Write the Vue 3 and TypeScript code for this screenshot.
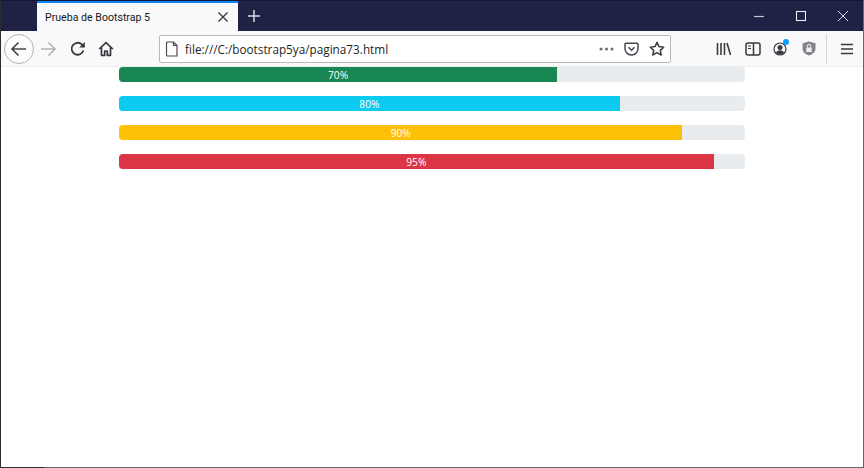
<script setup lang="ts">
const bars = [
  { value: 70, color: '#198754' },
  { value: 80, color: '#0dcaf0' },
  { value: 90, color: '#ffc107' },
  { value: 95, color: '#dc3545' },
]
</script>

<template>
  <div class="window">
    <header class="titlebar">
      <div class="tab">
        <span class="tab-title">Prueba de Bootstrap 5</span>
        <svg class="tab-close" width="12" height="12" viewBox="0 0 12 12"><path d="M1.5 1.5l9 9M10.5 1.5l-9 9" stroke="#3a3a44" stroke-width="1.4" fill="none"/></svg>
      </div>
      <svg class="new-tab" width="14" height="14" viewBox="0 0 14 14"><path d="M7 1v12M1 7h12" stroke="#d8d9e2" stroke-width="1.5" fill="none"/></svg>
      <div class="win-controls">
        <svg width="12" height="12" viewBox="0 0 12 12"><path d="M1 6.500h10" stroke="#c8c9d4" stroke-width="1.2" fill="none"/></svg>
        <svg width="12" height="12" viewBox="0 0 12 12"><rect x="1.500" y="1.500" width="9" height="9" stroke="#ececf2" stroke-width="1.1" fill="none"/></svg>
        <svg width="12" height="12" viewBox="0 0 12 12"><path d="M1 1l10 10M11 1L1 11" stroke="#dcdce6" stroke-width="1" fill="none"/></svg>
      </div>
    </header>

    <nav class="toolbar">
      <div class="back">
        <svg width="18" height="16" viewBox="0 0 18 16"><path d="M16 8H2M8.500 1.500L2 8l6.500 6.500" stroke="#45454d" stroke-width="1.6" fill="none"/></svg>
      </div>
      <svg class="forward" width="18" height="16" viewBox="0 0 18 16"><path d="M2 8h14M9.500 1.500L16 8l-6.500 6.500" stroke="#b4b4b9" stroke-width="1.6" fill="none"/></svg>
      <svg class="reload" width="16" height="16" viewBox="0 0 16 16"><path d="M13.400 9.500A6 6 0 1 1 11.800 3.400L14 5.500" stroke="#38383f" stroke-width="1.8" fill="none"/><path d="M14.800 1v5.600H9.200z" fill="#38383f"/></svg>
      <svg class="home" width="16" height="16" viewBox="0 0 16 16"><path d="M1.200 8L8 1.600 14.800 8M3.500 6.600v7.700h3.200V10h2.600v4.300h3.200V6.600" stroke="#38383f" stroke-width="1.7" fill="none" stroke-linejoin="round"/></svg>

      <div class="urlbar">
        <svg class="file" width="14" height="16" viewBox="0 0 14 16"><path d="M2.500 1h6l3.500 3.500v10.500h-9.500a1 1 0 0 1-1-1V2a1 1 0 0 1 1-1zM8.500 1v3.500H12" stroke="#4a4a52" stroke-width="1.200" fill="none"/></svg>
        <span class="url">file:///C:/bootstrap5ya/pagina73.html</span>
        <svg class="dots" width="15" height="4" viewBox="0 0 15 4"><circle cx="2" cy="2" r="1.500" fill="#6a6a72"/><circle cx="7.500" cy="2" r="1.500" fill="#6a6a72"/><circle cx="13" cy="2" r="1.500" fill="#6a6a72"/></svg>
        <svg class="pocket" width="15" height="14" viewBox="0 0 15 14"><path d="M1 2.200a1 1 0 0 1 1-1h11a1 1 0 0 1 1 1v4.300a6.500 6.500 0 0 1-13 0zM4.500 5.200l3 3 3-3" stroke="#47474f" stroke-width="1.500" fill="none"/></svg>
        <svg class="star" width="16" height="15" viewBox="0 0 16 15"><path d="M8 1.300l2 4.300 4.700.6-3.400 3.200.9 4.600L8 11.700 3.800 14l.9-4.600L1.300 6.200 6 5.600z" stroke="#3c3c44" stroke-width="1.500" fill="none" stroke-linejoin="round"/></svg>
      </div>

      <svg class="library" width="16" height="14" viewBox="0 0 16 14"><path d="M1.500 1v12M5 1v12M8.500 1v12M11 1l3.500 12" stroke="#3c3c44" stroke-width="1.600" fill="none"/></svg>
      <svg class="sidebar" width="16" height="14" viewBox="0 0 16 14"><rect x="1" y="1" width="14" height="12" rx="2" stroke="#38383f" stroke-width="1.500" fill="none"/><path d="M8.500 1v12" stroke="#38383f" stroke-width="1.500"/><path d="M3 4h3M3 6.500h3" stroke="#38383f" stroke-width="1"/></svg>
      <div class="account">
        <svg width="14" height="14" viewBox="0 0 14 14"><circle cx="7" cy="7" r="6" stroke="#3c3c44" stroke-width="1.200" fill="none"/><circle cx="7" cy="5.500" r="2.500" fill="#3c3c44"/><path d="M2.800 11c.7-2 2.300-2.800 4.200-2.800s3.500.8 4.200 2.800A6 6 0 0 1 2.800 11z" fill="#3c3c44"/></svg>
        <span class="dot"></span>
      </div>
      <svg class="shield" width="14" height="15" viewBox="0 0 14 15"><path d="M7 .5l6.500 1.800v5.200c0 3.500-3 6-6.500 7-3.500-1-6.500-3.500-6.500-7V2.300z" fill="#85858b"/><rect x="4.300" y="6.500" width="5.400" height="4.500" rx=".6" fill="#f0f0f2"/><path d="M5.400 6.500V5a1.600 1.600 0 0 1 3.200 0v1.500" stroke="#f0f0f2" stroke-width="1" fill="none"/></svg>
      <span class="sep"></span>
      <svg class="menu" width="12" height="12" viewBox="0 0 12 12"><path d="M0 1.500h12M0 6h12M0 10.500h12" stroke="#38383f" stroke-width="1.600" fill="none"/></svg>
    </nav>

    <main class="content">
      <div v-for="bar in bars" :key="bar.value" class="progress">
        <div class="progress-bar" :style="{ width: bar.value + '%', background: bar.color }">{{ bar.value }}%</div>
      </div>
    </main>
  </div>
</template>

<style>
html, body { margin: 0; background: #fff; overflow: hidden; }
</style>

<style scoped>
.window {
  position: relative;
  width: 864px;
  height: 468px;
  box-sizing: border-box;
  display: flex;
  flex-direction: column;
  border-left: 1px solid #2b2b33;
  border-bottom: 1px solid #666;
  border-right: 1px solid #666;
  background: #fff;
  font-family: "Open Sans", "Noto Sans", sans-serif;
}
.window::after {
  content: "";
  position: absolute;
  left: -1px;
  bottom: -1px;
  width: 44px;
  height: 1px;
  background: #2b2b33;
}
.titlebar {
  height: 31px;
  flex: none;
  box-sizing: border-box;
  background: #1f2244;
  border-top: 1px solid #17182f;
  display: flex;
  align-items: flex-start;
}
.tab {
  margin-left: 36px;
  width: 201px;
  height: 30px;
  box-sizing: border-box;
  background: #f9f9fa;
  border-top: 2px solid #0a84ff;
  display: flex;
  align-items: center;
  padding: 0 9px 0 8px;
  justify-content: space-between;
  color: #18181a;
}
.tab-title {
  font-size: 10.6px;
  font-family: Roboto, sans-serif;
  white-space: nowrap;
}
.new-tab { margin: 8px 0 0 9px; }
.win-controls {
  margin-left: auto;
  margin-top: 9px;
  margin-right: 14px;
  display: flex;
  gap: 30px;
}
.toolbar {
  height: 36px;
  flex: none;
  box-sizing: border-box;
  background: #f9f9fa;
  border-bottom: 1px solid #ececee;
  display: flex;
  align-items: center;
  padding-left: 3px;
}
.back {
  width: 30px;
  height: 30px;
  box-sizing: border-box;
  border: 1px solid #b4b4b8;
  border-radius: 50%;
  background: #fdfdfd;
  display: flex;
  align-items: center;
  justify-content: center;
  flex: none;
}
.forward { margin-left: 5px; flex: none; }
.reload { margin-left: 13px; flex: none; }
.home { margin-left: 12px; flex: none; }
.urlbar {
  margin-left: 45px;
  width: 512px;
  height: 28px;
  box-sizing: border-box;
  background: #fff;
  border: 1px solid #b9b9bd;
  border-radius: 2px;
  display: flex;
  align-items: center;
  padding-left: 5px;
  flex: none;
}
.file { flex: none; }
.url {
  margin-left: 6px;
  font-size: 11.75px;
  color: #1f1f24;
  white-space: nowrap;
  font-family: "Open Sans", sans-serif;
}
.dots { margin-left: auto; flex: none; }
.pocket { margin-left: 10px; flex: none; }
.star { margin-left: 10px; margin-right: 5px; flex: none; }
.library { margin-left: 45px; flex: none; }
.sidebar { margin-left: 13px; flex: none; }
.account { margin-left: 12px; position: relative; width: 14px; height: 14px; flex: none; }
.account svg { display: block; }
.dot {
  position: absolute;
  top: -3px;
  right: -2px;
  width: 6px;
  height: 6px;
  border-radius: 50%;
  background: #0a9dff;
}
.shield { margin-left: 15px; flex: none; }
.sep {
  margin-left: 10px;
  width: 1px;
  height: 30px;
  background: #d4d4d6;
  flex: none;
}
.menu { margin-left: 14px; flex: none; }
.content {
  flex: 1;
  padding: 0 118px;
  display: flex;
  flex-direction: column;
  gap: 14.5px;
}
.progress {
  height: 14.5px;
  border-radius: 4px;
  background: #e9ecef;
  overflow: hidden;
  display: flex;
}
.progress-bar {
  color: #fff;
  font-size: 10.2px;
  line-height: 16px;
  text-align: center;
  white-space: nowrap;
}
</style>
